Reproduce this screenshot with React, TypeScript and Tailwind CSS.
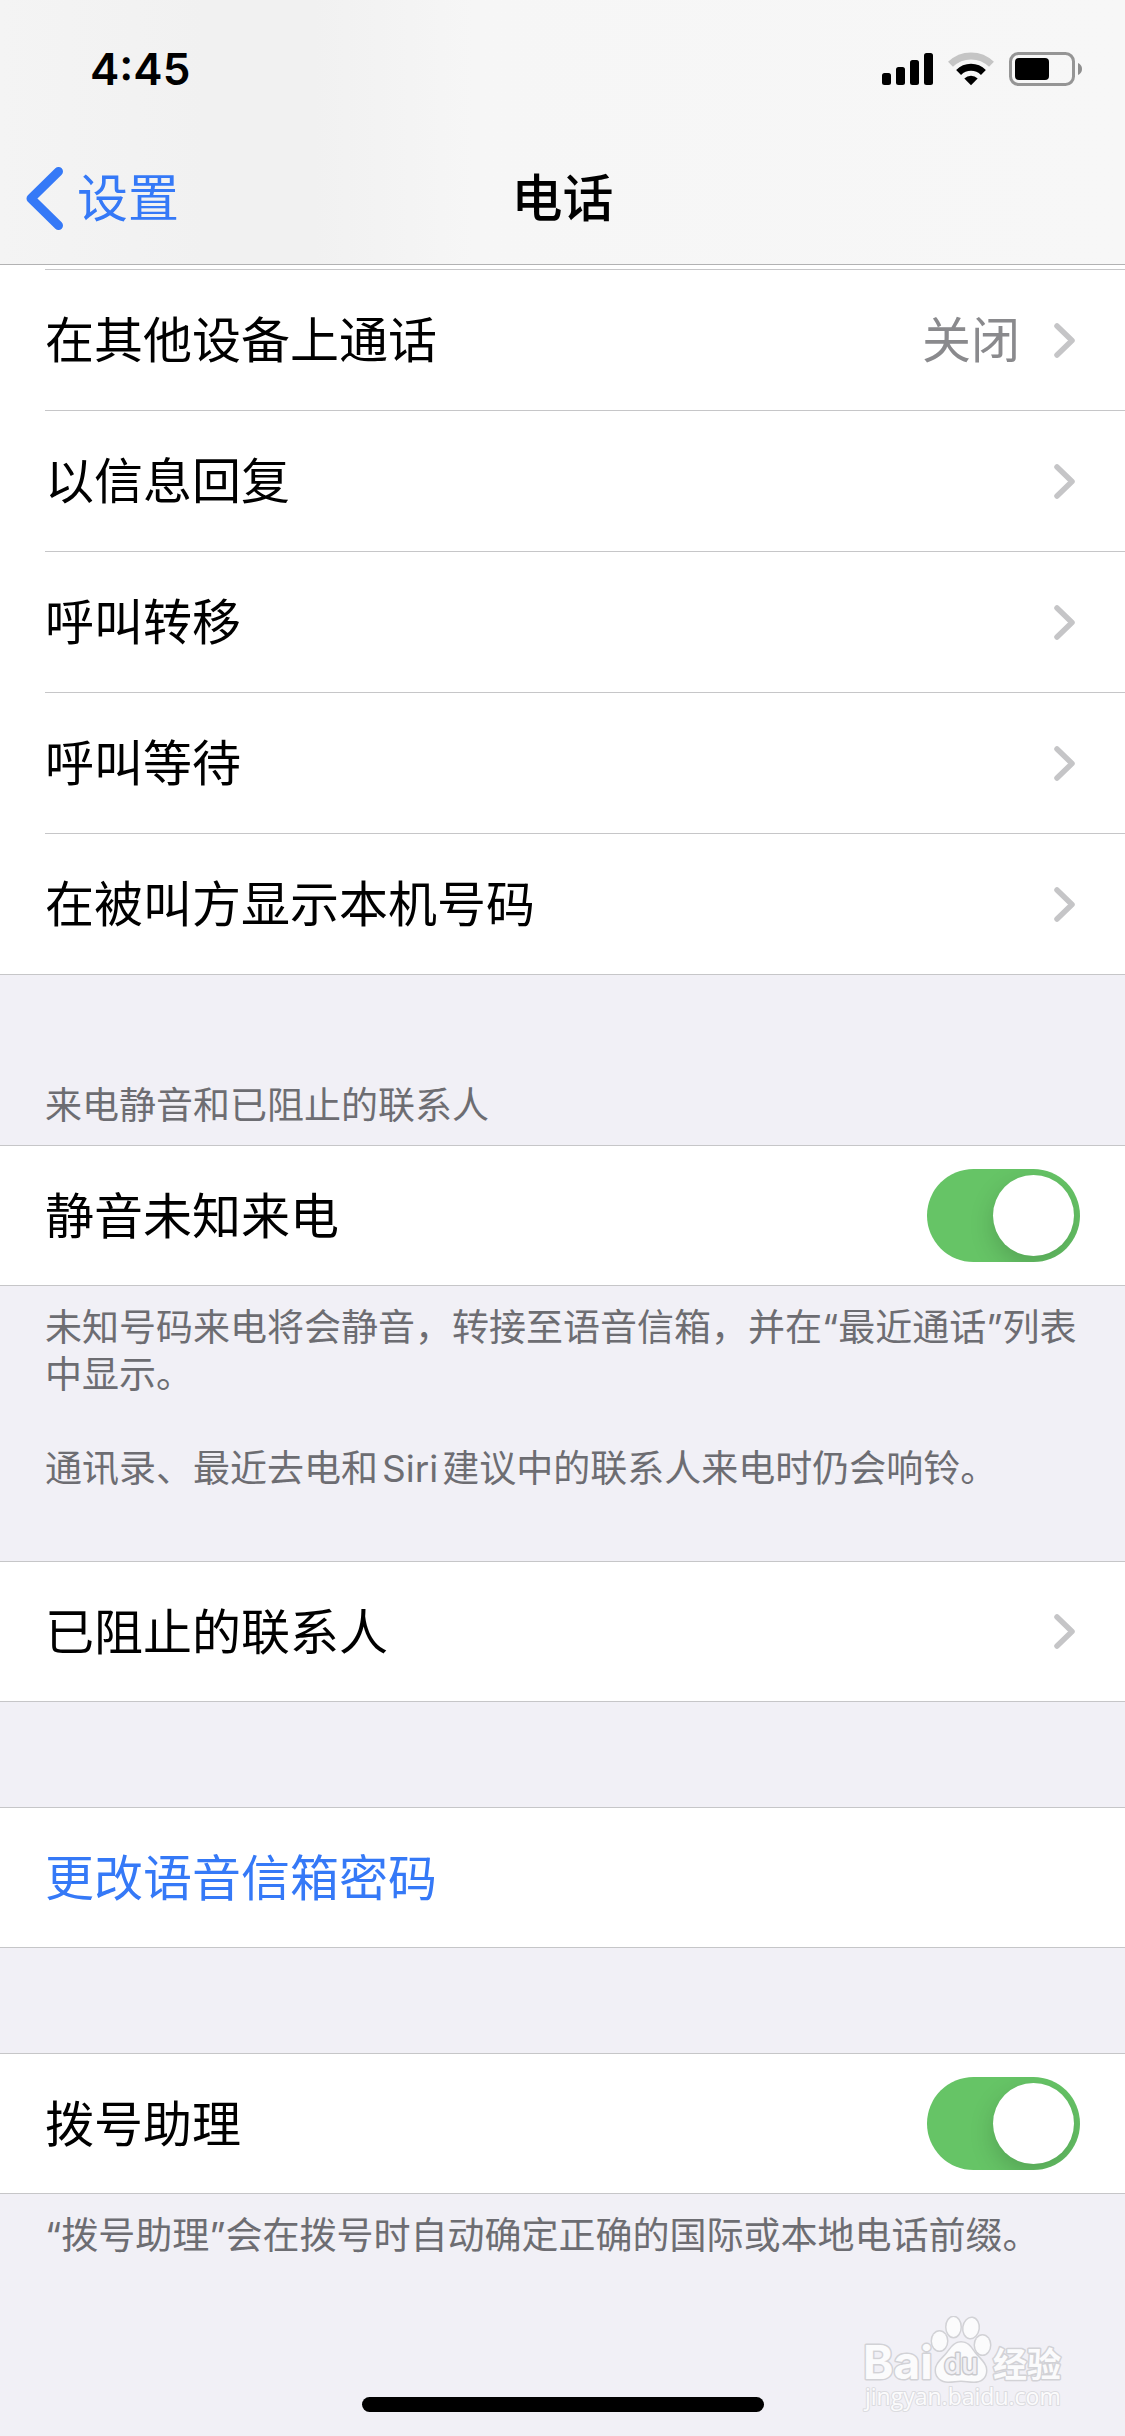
import { useState } from 'react';
import type { ReactNode } from 'react';

const callRows = [
    { label: '在其他设备上通话', value: '关闭' },
    { label: '以信息回复' },
    { label: '呼叫转移' },
    { label: '呼叫等待' },
    { label: '在被叫方显示本机号码' },
];

function SignalIcon() {
    return (
        <svg width="51" height="34" viewBox="0 0 51 34" aria-hidden="true">
            <rect x="0" y="21" width="9" height="12" rx="2.5" />
            <rect x="14" y="15" width="9" height="18" rx="2.5" />
            <rect x="28" y="8" width="9" height="25" rx="2.5" />
            <rect x="42" y="1" width="9" height="32" rx="2.5" />
        </svg>
    );
}

function WifiIcon() {
    return (
        <svg width="46" height="34" viewBox="0 0 46 34" fill="none" aria-hidden="true">
            <path d="M2.5 12.3a29.2 29.2 0 0 1 41 0" stroke="#c5c5c5" strokeWidth="7" />
            <path d="M10.6 20.4a17.7 17.7 0 0 1 24.8 0" stroke="#000" strokeWidth="7" />
            <path d="M16.3 26.6a9.5 9.5 0 0 1 13.4 0L23 33.2z" fill="#000" />
        </svg>
    );
}

function BatteryIcon() {
    return (
        <svg width="73" height="34" viewBox="0 0 73 34" aria-hidden="true">
            <rect x="1.5" y="1.5" width="63" height="31" rx="8" fill="none" stroke="#959595" strokeWidth="3" />
            <rect x="6" y="6" width="34" height="22" rx="4" />
            <path d="M69 11c2.6 1 4 3.4 4 6s-1.4 5-4 6z" fill="#8e8e8e" />
        </svg>
    );
}

function Chevron() {
    return (
        <svg width="21" height="35" viewBox="0 0 21 35" fill="none" stroke="#c5c5c7" strokeWidth="5.5" strokeLinecap="round" strokeLinejoin="round" aria-hidden="true">
            <path d="M3 3l15 14.5L3 32" />
        </svg>
    );
}

function LinkRow({ label, value }: { label: string; value?: string }) {
    return (
        <a href="#" className="flex h-full items-center pr-[50px]">
            <span className="flex-1 pt-0.5">{label}</span>
            {value && <span className="mr-[34px] pt-0.5 text-[#8a8a8d]">{value}</span>}
            <Chevron />
        </a>
    );
}

function SwitchRow({ label, checked, onChange }: { label: string; checked: boolean; onChange: (v: boolean) => void }) {
    return (
        <label className="flex h-full items-center justify-between pr-[45px]">
            <span className="pt-0.5">{label}</span>
            <input
                type="checkbox"
                role="switch"
                checked={checked}
                onChange={(e) => onChange(e.target.checked)}
                className="flex h-[93px] w-[153px] appearance-none items-center overflow-hidden rounded-full bg-[#e9e9ea] p-1.5 before:size-[81px] before:rounded-full before:bg-white before:shadow-[0_9px_24px_rgba(0,0,0,0.17)] checked:justify-end checked:bg-[#66c466]"
            />
        </label>
    );
}

function Group({ children }: { children: ReactNode }) {
    return <section className="h-[141px] border-y border-[#c6c6c8] bg-white pl-[45px]">{children}</section>;
}

function Watermark() {
    return (
        <svg width="210" height="104" viewBox="0 0 210 104" className="absolute right-[55px] bottom-4" fill="#fbfbfc" stroke="#d2d2d6" strokeWidth="3" paintOrder="stroke" strokeLinejoin="round" aria-label="Baidu 经验">
            <text x="3" y="63" fontFamily="Inter, sans-serif" fontWeight="700" fontSize="46">Bai</text>
            <ellipse cx="79.5" cy="25" rx="7.5" ry="9.5" />
            <ellipse cx="93.5" cy="11" rx="7" ry="10" />
            <ellipse cx="111" cy="12" rx="7.5" ry="10" transform="rotate(8 111 12)" />
            <ellipse cx="122.5" cy="29" rx="7.5" ry="9.5" />
            <path d="M101 26.5c8 0 10 6 14 11 5 6 11 10 11 17 0 8-6 11-12 11-5 0-9-1-13-1s-8 1-13 1c-6 0-12-4-12-11s6-11 11-17c4-5 7-11 14-11z" />
            <text x="84" y="58" fontFamily="Inter, sans-serif" fontWeight="500" fontSize="28" fill="#f1f0f5" stroke="#cacace">du</text>
            <text x="133" y="61" fontFamily="'Noto Sans CJK SC', sans-serif" fontWeight="700" fontSize="34">经验</text>
            <text x="5" y="89" fontFamily="'Open Sans', sans-serif" fontSize="23" stroke="#dcdce0" strokeWidth="2">jingyan.baidu.com</text>
        </svg>
    );
}

export default function App() {
    const [silence, setSilence] = useState(true);
    const [dialAssist, setDialAssist] = useState(true);

    return (
        <div lang="zh-CN" className="relative flex min-h-screen flex-col bg-[#f1f0f6] font-[Inter,'Noto_Sans_CJK_SC',sans-serif] text-[49px] leading-[70px] text-black">
            <header className="border-b border-[#b2b2b3] bg-[linear-gradient(90deg,#f4f4f4_0%,#f1f1f1_18%,#f1f1f1_28%,#f6f6f6_42%,#f7f7f7_100%)]">
                <div className="flex h-[132px] items-center justify-between pt-1.5 pr-[43px] pl-[90px]">
                    <time className="text-[44px] leading-[52px] font-semibold">4:45</time>
                    <div className="flex items-center gap-[15px]">
                        <SignalIcon />
                        <WifiIcon />
                        <BatteryIcon />
                    </div>
                </div>
                <nav className="grid h-[132px] grid-cols-3 items-center px-[26px] text-[51px]">
                    <a href="#" className="flex items-center gap-3.5 text-[#3579f7]">
                        <svg width="37" height="63" viewBox="0 0 37 63" fill="none" stroke="currentColor" strokeWidth="9" strokeLinecap="round" strokeLinejoin="round" aria-hidden="true">
                            <path d="M32.5 4.5L5 31.5l27.5 27" />
                        </svg>
                        <span className="pt-0.5">设置</span>
                    </a>
                    <h1 className="pt-0.5 text-center font-medium">电话</h1>
                </nav>
            </header>

            <main>
                <ul className="border-b border-[#c6c6c8] bg-white pt-1 pl-[45px]">
                    {callRows.map((row) => (
                        <li key={row.label} className="h-[141px] border-t border-[#c6c6c8]">
                            <LinkRow label={row.label} value={row.value} />
                        </li>
                    ))}
                </ul>

                <h2 className="px-[45px] pt-[107px] pb-4 text-[37px] leading-[47px] text-[#6d6d72]">来电静音和已阻止的联系人</h2>
                <Group>
                    <SwitchRow label="静音未知来电" checked={silence} onChange={setSilence} />
                </Group>
                <div className="flex flex-col gap-[47px] px-[45px] pt-[18px] pb-[69px] text-[37px] leading-[47px] text-[#6d6d72]">
                    <p>未知号码来电将会静音，转接至语音信箱，并在“最近通话”列表中显示。</p>
                    <p>通讯录、最近去电和<span className="mx-1">Siri</span>建议中的联系人来电时仍会响铃。</p>
                </div>

                <Group>
                    <LinkRow label="已阻止的联系人" />
                </Group>
                <div className="h-[105px]" />
                <Group>
                    <button type="button" className="h-full w-full pt-0.5 text-left text-[#3579f7]">更改语音信箱密码</button>
                </Group>
                <div className="h-[105px]" />
                <Group>
                    <SwitchRow label="拨号助理" checked={dialAssist} onChange={setDialAssist} />
                </Group>
                <p className="px-[45px] pt-[18px] text-[37px] leading-[47px] text-[#6d6d72]">“拨号助理”会在拨号时自动确定正确的国际或本地电话前缀。</p>
            </main>

            <footer className="mt-auto flex justify-center pb-6">
                <div className="h-[15px] w-[402px] rounded-full bg-black" />
            </footer>
            <Watermark />
        </div>
    );
}
